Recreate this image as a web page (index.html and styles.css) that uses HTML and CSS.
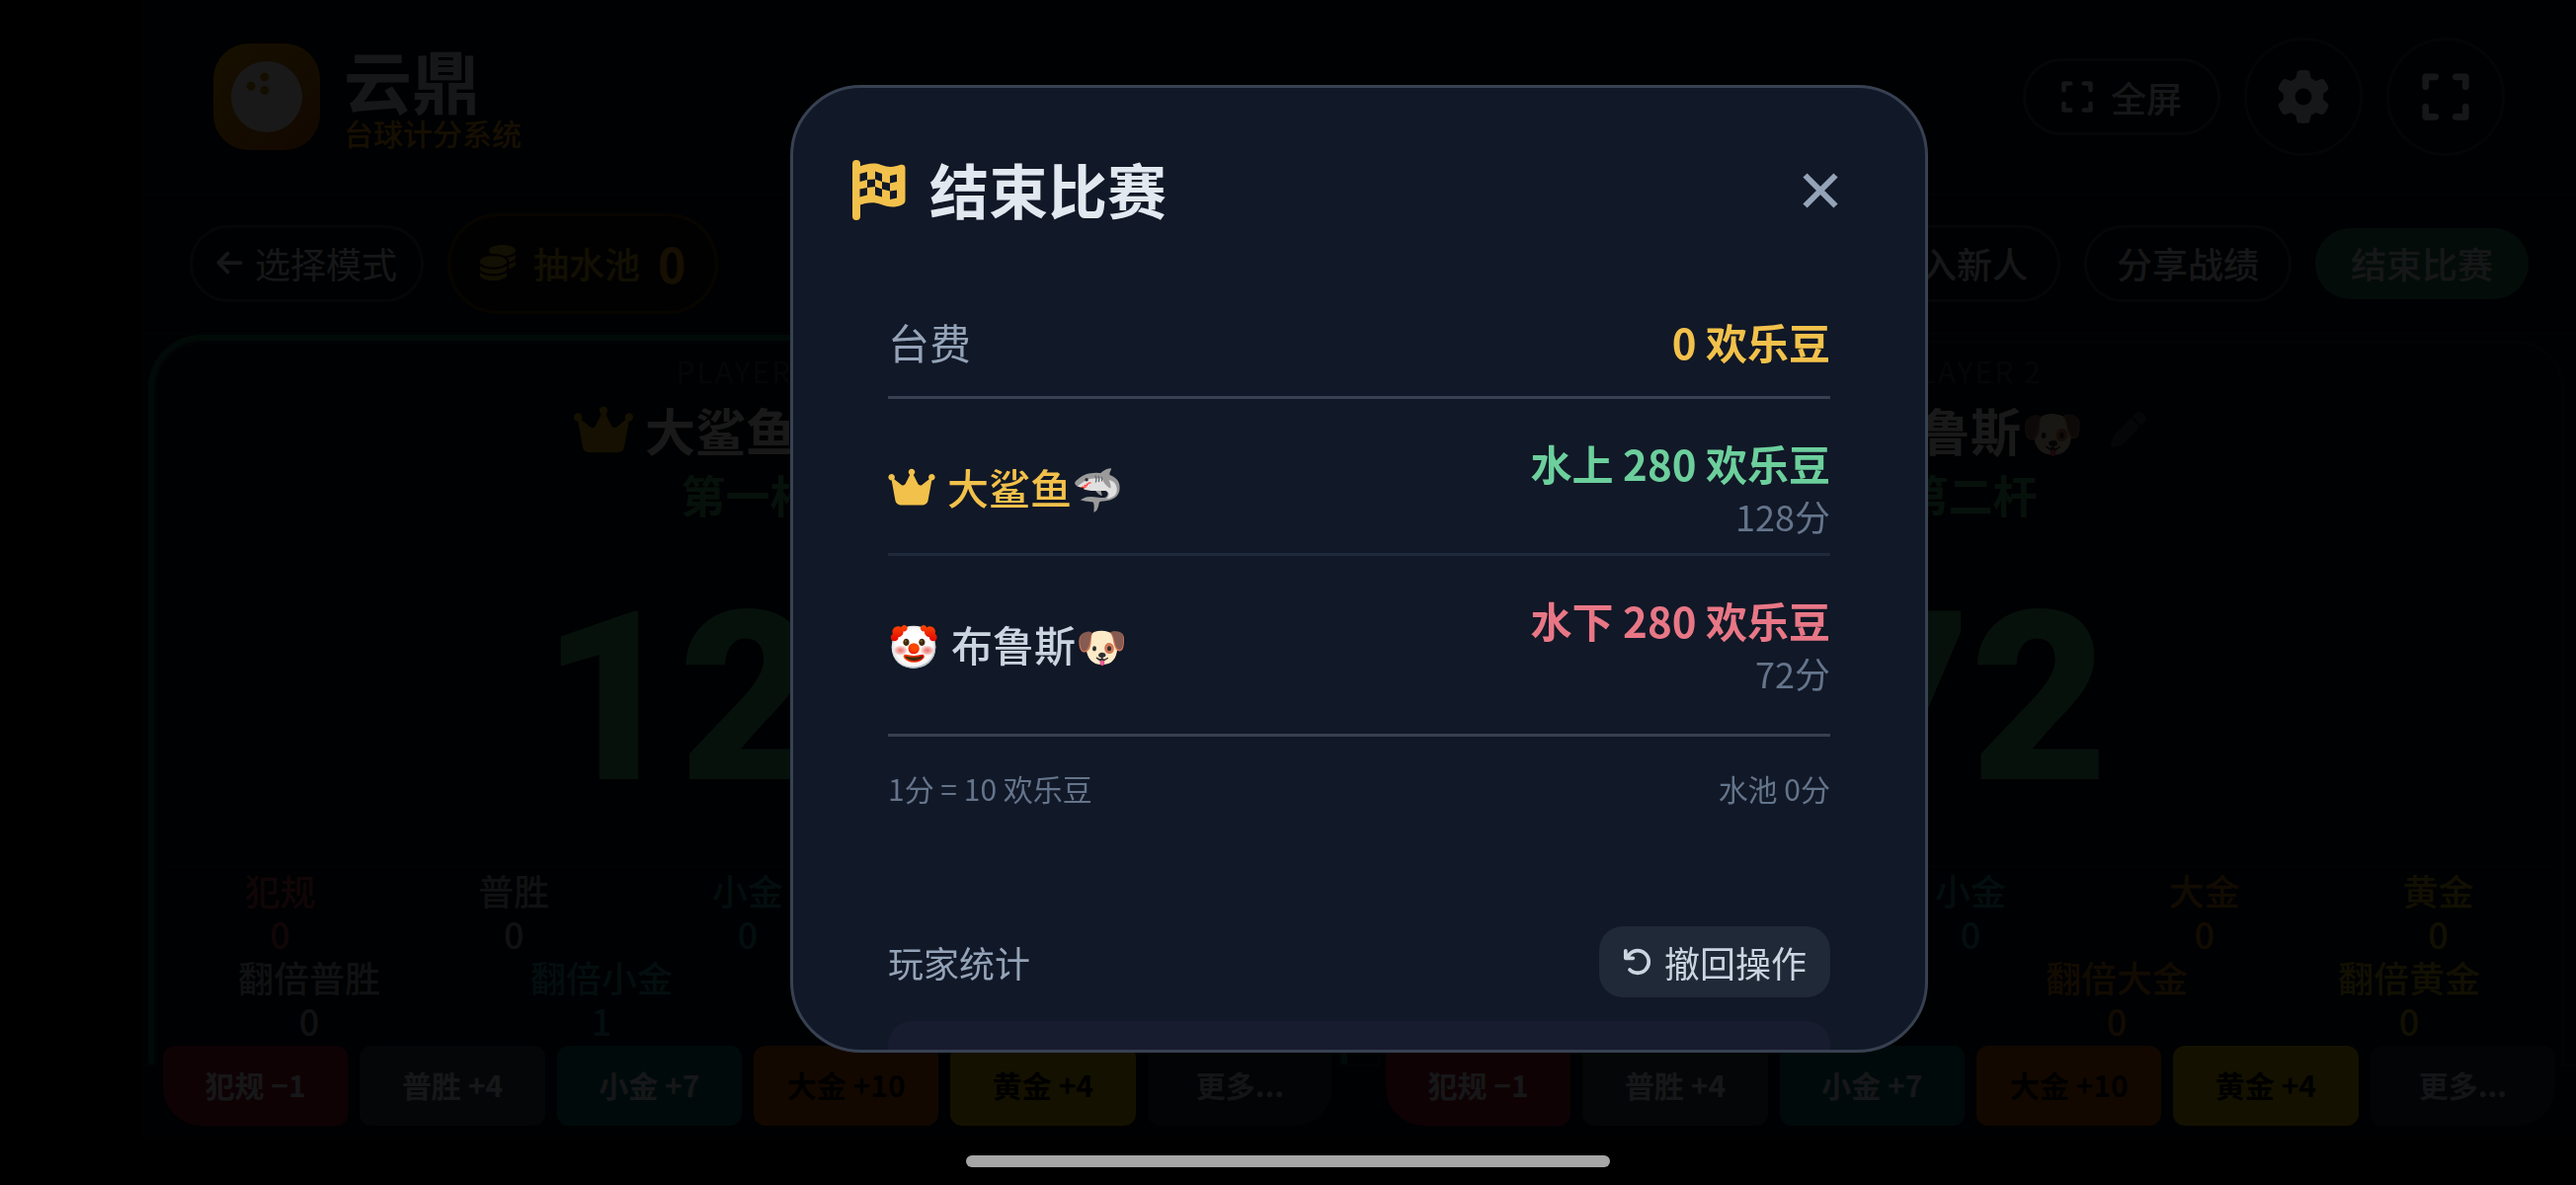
FILE: index.html
```html
<!DOCTYPE html>
<html lang="zh-CN">
<head>
    <meta charset="UTF-8">
    <meta name="viewport" content="width=device-width, initial-scale=1.0">
    <title>云鼎 台球计分系统</title>
    <link rel="stylesheet" href="styles.css">
</head>
<body>
    <!-- shared icons -->
    <svg class="sprite" aria-hidden="true">
        <symbol id="i-crown" viewBox="0 0 576 512"><path d="M309 106c11.4-7 19-19.7 19-34c0-22.1-17.9-40-40-40s-40 17.9-40 40c0 14.4 7.6 27 19 34L209.7 220.6c-9.1 18.2-32.7 23.4-48.6 10.7L72 160c5-6.7 8-15 8-24c0-22.1-17.9-40-40-40S0 113.9 0 136s17.9 40 40 40c.2 0 .5 0 .7 0L86.4 427.4c5.5 30.4 32 52.6 63 52.6H426.6c30.9 0 57.4-22.1 63-52.6L535.3 176c.2 0 .5 0 .7 0c22.1 0 40-17.9 40-40s-17.9-40-40-40s-40 17.9-40 40c0 9 3 17.3 8 24l-89.1 71.3c-15.9 12.7-39.5 7.5-48.6-10.7L309 106z"/></symbol>
        <symbol id="i-expand" viewBox="0 0 448 512"><path d="M32 32C14.3 32 0 46.3 0 64v96c0 17.7 14.3 32 32 32s32-14.3 32-32V96h64c17.7 0 32-14.3 32-32s-14.3-32-32-32H32zM64 352c0-17.7-14.3-32-32-32s-32 14.3-32 32v96c0 17.7 14.3 32 32 32h96c17.7 0 32-14.3 32-32s-14.3-32-32-32H64V352zM320 32c-17.7 0-32 14.3-32 32s14.3 32 32 32h64v64c0 17.7 14.3 32 32 32s32-14.3 32-32V64c0-17.7-14.3-32-32-32H320zM448 352c0-17.7-14.3-32-32-32s-32 14.3-32 32v64H320c-17.7 0-32 14.3-32 32s14.3 32 32 32h96c17.7 0 32-14.3 32-32V352z"/></symbol>
        <symbol id="i-gear" viewBox="0 0 512 512"><path d="M495.9 166.6c3.2 8.7 .5 18.4-6.4 24.6l-43.3 39.4c1.1 8.3 1.7 16.8 1.7 25.4s-.6 17.1-1.7 25.4l43.3 39.4c6.9 6.2 9.6 15.9 6.4 24.6c-4.4 11.9-9.7 23.3-15.8 34.3l-4.7 8.1c-6.6 11-14 21.4-22.1 31.2c-5.9 7.2-15.7 9.6-24.5 6.8l-55.7-17.7c-13.4 10.3-28.2 18.9-44 25.4l-12.5 57.1c-2 9.1-9 16.3-18.2 17.8c-13.8 2.3-28 3.5-42.5 3.5s-28.7-1.2-42.5-3.5c-9.2-1.5-16.2-8.7-18.2-17.8l-12.5-57.1c-15.8-6.5-30.6-15.1-44-25.4L83.1 425.9c-8.8 2.8-18.6 .3-24.5-6.8c-8.1-9.8-15.5-20.2-22.1-31.2l-4.7-8.1c-6.1-11-11.4-22.4-15.8-34.3c-3.2-8.7-.5-18.4 6.4-24.6l43.3-39.4C64.6 273.1 64 264.6 64 256s.6-17.1 1.7-25.4L22.4 191.2c-6.9-6.2-9.6-15.9-6.4-24.6c4.4-11.9 9.7-23.3 15.8-34.3l4.7-8.1c6.6-11 14-21.4 22.1-31.2c5.9-7.2 15.7-9.6 24.5-6.8l55.7 17.7c13.4-10.3 28.2-18.9 44-25.4l12.5-57.1c2-9.1 9-16.3 18.2-17.8C227.3 1.2 241.5 0 256 0s28.7 1.2 42.5 3.5c9.2 1.5 16.2 8.7 18.2 17.8l12.5 57.1c15.8 6.5 30.6 15.1 44 25.4l55.7-17.7c8.8-2.8 18.6-.3 24.5 6.8c8.1 9.8 15.5 20.2 22.1 31.2l4.7 8.1c6.1 11 11.4 22.4 15.8 34.3zM256 336a80 80 0 1 0 0-160 80 80 0 1 0 0 160z"/></symbol>
        <symbol id="i-pen" viewBox="0 0 512 512"><path d="M362.7 19.3L314.3 67.7 444.3 197.7l48.4-48.4c25-25 25-65.5 0-90.5L453.3 19.3c-25-25-65.5-25-90.5 0zm-71 71L58.6 323.5c-10.4 10.4-18 23.3-22.2 37.4L1 481.2C-1.5 489.7 .8 498.8 7 505s15.3 8.5 23.7 6.1l120.3-35.4c14.1-4.2 27-11.8 37.4-22.2L421.7 220.3 291.7 90.3z"/></symbol>
    </svg>

    <div class="app">
        <header class="topbar">
            <div class="brand">
                <svg class="logo" viewBox="0 0 36 36" aria-hidden="true">
                    <circle cx="18" cy="18" r="12" fill="#fff"/>
                    <circle cx="12.7" cy="14.4" r="1.5" fill="#c98a06"/>
                    <circle cx="17.3" cy="11.3" r="1.5" fill="#c98a06"/>
                    <circle cx="17.3" cy="15.8" r="1.5" fill="#c98a06"/>
                </svg>
                <div>
                    <h1>云鼎</h1>
                    <p>台球计分系统</p>
                </div>
            </div>
            <div class="top-actions">
                <button class="pill pill-full"><svg class="icon"><use href="#i-expand"/></svg>全屏</button>
                <button class="round" aria-label="设置"><svg class="icon-lg"><use href="#i-gear"/></svg></button>
                <button class="round" aria-label="全屏"><svg class="icon-lg"><use href="#i-expand"/></svg></button>
            </div>
        </header>

        <nav class="toolbar">
            <button class="pill pill-back">
                <svg class="icon-sm" viewBox="0 0 448 512"><path d="M9.4 233.4c-12.5 12.5-12.5 32.8 0 45.3l160 160c12.5 12.5 32.8 12.5 45.3 0s12.5-32.8 0-45.3L109.2 288 416 288c17.7 0 32-14.3 32-32s-14.3-32-32-32l-306.7 0L214.6 118.6c12.5-12.5 12.5-32.8 0-45.3s-32.8-12.5-45.3 0l-160 160z"/></svg>选择模式
            </button>
            <div class="pool">
                <svg class="icon-pool" viewBox="0 0 512 512"><path d="M512 80c0 18-14.3 34.6-38.4 48c-29.1 16.1-72.5 27.5-122.3 30.9c-3.7-1.8-7.4-3.5-11.3-5C300.6 137.4 248.2 128 192 128c-8.3 0-16.4 .2-24.5 .6l-1.1-.6C142.3 114.6 128 98 128 80c0-44.2 86-80 192-80S512 35.8 512 80zM160.7 161.1c10.2-.7 20.7-1.1 31.3-1.1c62.2 0 117.4 12.3 152.5 31.4C369.3 204.9 384 221.7 384 240c0 4-.7 7.9-2.1 11.7c-4.6 13.2-17 25.3-35 35.5c-.4 .2-.9 .5-1.3 .7c-35 19.4-90.8 32-153.6 32c-59.6 0-112.9-11.3-148.2-29.1c-1.9-.9-3.7-1.9-5.5-2.9C14.3 274.6 0 258 0 240c0-34.8 53.4-64.5 128-75.4c10.5-1.5 21.4-2.7 32.7-3.5zM416 240c0-21.9-10.6-39.9-24.1-53.4c28.3-4.4 54.2-11.4 76.2-20.5c16.3-6.8 31.5-15.2 43.9-25.5V176c0 19.3-16.5 37.1-43.8 50.9c-14.6 7.4-32.4 13.7-52.4 18.5c.1-1.8 .2-3.5 .2-5.3zm-32 96c0 18-14.3 34.6-38.4 48c-1.8 1-3.6 1.9-5.5 2.9C304.9 404.7 251.6 416 192 416c-62.8 0-118.6-12.6-153.6-32C14.3 370.6 0 354 0 336V300.6c12.5 10.3 27.6 18.7 43.9 25.5C83.4 342.6 135.8 352 192 352s108.6-9.4 148.1-25.9c16.3-6.8 31.5-15.2 43.9-25.5V336zm32 0V278.1c19-4.2 36.5-9.5 52.1-16c16.3-6.8 31.5-15.2 43.9-25.5V272c0 10.5-5 21-14.9 30.9c-16.3 16.3-45 29.7-81.3 38.4c.1-1.7 .2-3.5 .2-5.3zM192 448c56.2 0 108.6-9.4 148.1-25.9c16.3-6.8 31.5-15.2 43.9-25.5V432c0 44.2-86 80-192 80S0 476.2 0 432V396.6c12.5 10.3 27.6 18.7 43.9 25.5C83.4 438.6 135.8 448 192 448z"/></svg>
                <span>抽水池</span>
                <strong>0</strong>
            </div>
            <div class="spacer"></div>
            <button class="pill">加入新人</button>
            <button class="pill">分享战绩</button>
            <button class="pill pill-end">结束比赛</button>
        </nav>

        <main class="board">
            <section class="player active">
                <p class="tag">PLAYER 1</p>
                <h2 class="name"><svg class="crown"><use href="#i-crown"/></svg><span>大鲨鱼🦈</span><button class="edit" aria-label="修改名字"><svg class="icon-pen"><use href="#i-pen"/></svg></button></h2>
                <p class="turn">第一杆</p>
                <p class="score">128</p>
                <div class="stats stats-top">
                    <div class="c-foul">犯规<b>0</b></div>
                    <div class="c-win">普胜<b>0</b></div>
                    <div class="c-small">小金<b>0</b></div>
                    <div class="c-big">大金<b>0</b></div>
                    <div class="c-gold">黄金<b>0</b></div>
                </div>
                <div class="stats">
                    <div class="c-win">翻倍普胜<b>0</b></div>
                    <div class="c-small">翻倍小金<b>1</b></div>
                    <div class="c-big">翻倍大金<b>0</b></div>
                    <div class="c-gold">翻倍黄金<b>0</b></div>
                </div>
            </section>

            <section class="player">
                <p class="tag">PLAYER 2</p>
                <h2 class="name"><span>🤡</span><span>布鲁斯🐶</span><button class="edit" aria-label="修改名字"><svg class="icon-pen"><use href="#i-pen"/></svg></button></h2>
                <p class="turn">第二杆</p>
                <p class="score">72</p>
                <div class="stats stats-top">
                    <div class="c-foul">犯规<b>0</b></div>
                    <div class="c-win">普胜<b>0</b></div>
                    <div class="c-small">小金<b>0</b></div>
                    <div class="c-big">大金<b>0</b></div>
                    <div class="c-gold">黄金<b>0</b></div>
                </div>
                <div class="stats">
                    <div class="c-win">翻倍普胜<b>0</b></div>
                    <div class="c-small">翻倍小金<b>0</b></div>
                    <div class="c-big">翻倍大金<b>0</b></div>
                    <div class="c-gold">翻倍黄金<b>0</b></div>
                </div>
            </section>
        </main>

        <footer class="action-bar">
            <div class="actions">
                <button class="b-foul">犯规 −1</button>
                <button class="b-win">普胜 +4</button>
                <button class="b-small">小金 +7</button>
                <button class="b-big">大金 +10</button>
                <button class="b-gold">黄金 +4</button>
                <button class="b-more">更多...</button>
            </div>
            <div class="actions">
                <button class="b-foul">犯规 −1</button>
                <button class="b-win">普胜 +4</button>
                <button class="b-small">小金 +7</button>
                <button class="b-big">大金 +10</button>
                <button class="b-gold">黄金 +4</button>
                <button class="b-more">更多...</button>
            </div>
        </footer>
    </div>

    <!-- end of match dialog -->
    <div class="overlay">
        <div class="modal" role="dialog" aria-labelledby="modalTitle">
            <div class="modal-head">
                <svg class="flag" viewBox="0 0 54 61" aria-hidden="true">
                    <rect width="8" height="61" rx="4" fill="#f2c14b"/>
                    <path d="M6 7C14 4 22 2 29 5C37 8 43 7 48 5C51 4 53.500 5 53.500 8V41C53.500 43 52 44.500 50 45.500C43 48.500 36 48 29 45C22 42 14 43 6 46Z" fill="#f2c14b"/>
                    <path d="M7.500 14L15 12V20L7.500 22ZM15 20L23 19.500V27L15 28ZM7.500 29.500L15 28V35.500L7.500 37.500ZM23 11.500L30 14V22L23 19.500ZM23 27L30 29.500V37.500L23 35.500ZM30 22L38 23.500V31.500L30 29.500ZM38 16L45 14.500V22L38 23.500ZM38 31.500L45 30.500V38.500L38 40Z" fill="#111827"/>
                </svg>
                <h2 id="modalTitle">结束比赛</h2>
                <button class="close" aria-label="关闭">
                    <svg viewBox="0 0 36 36"><path d="M2.500 2.500L33.500 33.500M33.500 2.500L2.500 33.500"/></svg>
                </button>
            </div>
            <div class="modal-body">
                <div class="bill">
                    <div class="fee"><span>台费</span><strong>0 欢乐豆</strong></div>
                    <div class="result">
                        <span class="who winner"><svg class="crown"><use href="#i-crown"/></svg>大鲨鱼🦈</span>
                        <div class="amount"><strong class="up">水上 280 欢乐豆</strong><small>128分</small></div>
                    </div>
                    <div class="result">
                        <span class="who"><span>🤡</span>布鲁斯🐶</span>
                        <div class="amount"><strong class="down">水下 280 欢乐豆</strong><small>72分</small></div>
                    </div>
                    <div class="note"><span>1分 = 10 欢乐豆</span><span>水池 0分</span></div>
                </div>
                <div class="player-stats">
                    <div class="stats-head">
                        <h3>玩家统计</h3>
                        <button class="undo">
                            <svg viewBox="0 0 512 512"><path d="M125.700 160H176c17.700 0 32 14.300 32 32s-14.300 32-32 32H48c-17.700 0-32-14.300-32-32V64c0-17.700 14.300-32 32-32s32 14.300 32 32v51.200L97.600 97.600c87.500-87.500 229.300-87.500 316.800 0s87.500 229.300 0 316.800s-229.300 87.500-316.800 0c-12.500-12.500-12.500-32.800 0-45.300s32.800-12.500 45.300 0c62.500 62.500 163.800 62.500 226.300 0s62.500-163.800 0-226.300s-163.800-62.500-226.300 0L125.700 160z"/></svg>撤回操作
                        </button>
                    </div>
                    <div class="stat-card"></div>
                </div>
            </div>
        </div>
    </div>
    <div class="home-bar"></div>
</body>
</html>
```
FILE: styles.css
```css
/* general */
* {
    box-sizing: border-box;
}

body {
    margin: 0;
    height: 100vh;
    overflow: hidden;
    background-color: #000;
    color: #e2e8f0;
    font-family: "Noto Sans CJK SC", "Noto Sans", sans-serif;
    /* keep clear of the notch and the home bar */
    padding: 0 0 48px 144px;
}

h1, h2, h3, p {
    margin: 0;
}

button {
    font: inherit;
    color: inherit;
    background: none;
    border: none;
    padding: 0;
    cursor: pointer;
}

svg {
    fill: currentColor;
    flex: none;
}

.sprite {
    display: none;
}

.app {
    height: 100%;
    display: flex;
    flex-direction: column;
    background-color: #080c18;
}

/* top bar */
.topbar {
    display: flex;
    align-items: center;
    justify-content: space-between;
    height: 198px;
    padding: 0 72px;
    border-bottom: 3px solid #131a28;
}

.brand {
    display: flex;
    align-items: center;
    gap: 24px;
}

.logo {
    width: 108px;
    height: 108px;
    border-radius: 36px;
    background: linear-gradient(135deg, #e0a106, #c2540c);
}

.brand h1 {
    font-size: 69px;
    line-height: 72px;
    font-weight: 700;
}

.brand p {
    font-size: 30px;
    line-height: 36px;
    font-weight: 500;
    color: #d99a1c;
}

.top-actions {
    display: flex;
    align-items: center;
    gap: 24px;
}

.pill {
    display: flex;
    align-items: center;
    height: 78px;
    padding: 0 30px 3px;
    border: 3px solid #334155;
    border-radius: 39px;
    font-size: 36px;
    font-weight: 500;
}

.pill-full {
    gap: 18px;
    padding: 0 36px;
}

.pill-back {
    gap: 12px;
    padding: 0 24px 3px;
    font-weight: 400;
}

.pill-end {
    height: 72px;
    padding: 0 36px 3px;
    border: none;
    background-color: #2f7f5c;
}

.round {
    display: flex;
    align-items: center;
    justify-content: center;
    width: 120px;
    height: 120px;
    border: 3px solid #263244;
    border-radius: 50%;
}

.icon {
    width: 32px;
    height: 36px;
}

.icon-sm {
    width: 27px;
    height: 30px;
}

.icon-lg {
    width: 54px;
    height: 54px;
}

.icon-pool,
.icon-pen {
    width: 36px;
    height: 36px;
}

/* toolbar */
.toolbar {
    display: flex;
    align-items: center;
    gap: 24px;
    padding: 18px 48px;
    border-bottom: 3px solid #131a28;
}

.pool {
    display: flex;
    align-items: center;
    gap: 18px;
    height: 102px;
    padding: 0 30px 3px;
    border: 3px solid #54380c;
    border-radius: 51px;
    background-color: #171310;
    color: #b8a01c;
    font-size: 36px;
    font-weight: 500;
}

.pool strong {
    font-size: 48px;
    font-weight: 700;
    color: #d99a1c;
}

.spacer {
    flex: 1;
}

/* score board */
.board {
    flex: 1;
    display: flex;
    gap: 36px;
    padding: 6px 12px 0;
    overflow: hidden;
}

.player {
    flex: 1;
    display: flex;
    flex-direction: column;
    padding: 6px 6px 22px;
    border: 3px solid #1b2230;
    border-bottom: none;
    border-radius: 48px 48px 0 0;
    background-color: #060a14;
    text-align: center;
}

.active {
    box-shadow: 0 0 0 6px #0f6b48;
}

.tag {
    font-size: 30px;
    line-height: 42px;
    letter-spacing: 2px;
    color: #374151;
}

.name {
    display: flex;
    align-items: center;
    justify-content: center;
    gap: 12px;
    font-size: 51px;
    line-height: 78px;
    font-weight: 700;
    color: #fff;
}

.name .crown {
    width: 60px;
    height: 54px;
    color: #d0a60a;
}

.edit {
    display: flex;
    padding: 0 0 0 15px;
    color: #374151;
}

.turn {
    font-size: 45px;
    line-height: 54px;
    font-weight: 700;
    color: #46a878;
}

.score {
    flex: 1;
    display: flex;
    align-items: center;
    justify-content: center;
    padding-top: 10px;
    font-family: Roboto, sans-serif;
    font-size: 240px;
    line-height: 240px;
    font-weight: 900;
    color: #46a878;
}

.stats {
    display: flex;
    font-size: 36px;
    line-height: 44px;
    font-weight: 500;
}

.stats-top {
    border-top: 3px solid #131a28;
}

.stats div {
    flex: 1;
}

.stats b {
    display: block;
    font-weight: 500;
}

.c-foul { color: #a83e48; }
.c-win { color: #a3acb8; }
.c-small { color: #2a9096; }
.c-big { color: #b87318; }
.c-gold { color: #b8a01c; }

/* action buttons reach up into the player cards */
.action-bar {
    display: flex;
    gap: 42px;
    padding: 0 15px 12px;
    border-top: 3px solid #1b2230;
}

.actions {
    flex: 1;
    display: flex;
    gap: 12px;
    margin-top: -21px;
    padding: 0 6px;
    background-color: #060a14;
}

.actions button {
    flex: 1;
    height: 81px;
    padding-bottom: 3px;
    border-radius: 12px;
    font-size: 30px;
    font-weight: 700;
    color: #e2e8f0;
}

.actions button:first-child {
    border-bottom-left-radius: 39px;
}

.actions button:last-child {
    border-bottom-right-radius: 39px;
}

.actions .b-foul { background-color: #961430; }
.actions .b-win { background-color: #374151; }
.actions .b-small { background-color: #0f6672; }
.actions .b-big { background-color: #b45309; color: #000; }
.actions .b-gold { background-color: #c9a804; color: #000; }
.actions .b-more { background-color: #1f2937; color: #cbd5e1; }

/* dialog */
.overlay {
    position: fixed;
    inset: 0;
    display: flex;
    align-items: center;
    justify-content: center;
    padding: 0 0 48px 144px;
    background-color: rgba(0, 0, 0, 0.9);
}

.modal {
    display: flex;
    flex-direction: column;
    width: 1152px;
    height: 85%;
    border: 3px solid #374151;
    border-radius: 72px;
    background-color: #111827;
    overflow: hidden;
}

.modal-head {
    display: flex;
    align-items: center;
    gap: 24px;
    padding: 57px 60px 0;
}

.flag {
    width: 54px;
    height: 61px;
}

.modal-head h2 {
    flex: 1;
    font-size: 60px;
    line-height: 87px;
    padding-bottom: 3px;
    font-weight: 700;
}

.close {
    display: flex;
    padding: 29px 28px 27px;
}

.close svg {
    width: 36px;
    height: 36px;
    stroke: #94a3b8;
    stroke-width: 6;
}

.modal-body {
    flex: 1;
    padding: 0 60px;
    overflow: hidden;
}

.bill {
    padding: 76px 36px 36px;
}

.fee,
.result,
.note,
.stats-head {
    display: flex;
    align-items: center;
    justify-content: space-between;
}

.fee {
    padding-bottom: 24px;
    border-bottom: 3px solid #374151;
    font-size: 42px;
    line-height: 63px;
    color: #94a3b8;
}

.fee strong {
    color: #f2c14b;
}

.result {
    padding: 38px 0 10px;
    border-bottom: 3px solid #1e293b;
    font-size: 42px;
    line-height: 54px;
}

.result:nth-child(3) {
    padding-bottom: 34px;
    border-bottom-color: #374151;
}

.who {
    display: flex;
    align-items: center;
    gap: 12px;
    padding-bottom: 6px;
    font-weight: 500;
    color: #cbd5e1;
}

.who .crown {
    width: 48px;
    height: 42px;
}

.winner {
    color: #f2c14b;
}

.amount {
    text-align: right;
}

.amount strong,
.amount small {
    display: block;
}

.amount small {
    font-size: 36px;
    line-height: 52px;
    padding-bottom: 2px;
    color: #64748b;
}

.up { color: #6ccf9c; }
.down { color: #e87786; }

.note {
    padding-top: 31px;
    font-size: 30px;
    line-height: 42px;
    color: #64748b;
}

.player-stats {
    padding: 83px 36px 0;
}

.stats-head h3 {
    font-size: 36px;
    font-weight: 400;
    color: #94a3b8;
}

.undo {
    display: flex;
    align-items: center;
    gap: 12px;
    height: 72px;
    padding: 0 24px;
    border-radius: 24px;
    background-color: #1f2937;
    font-size: 36px;
    color: #cbd5e1;
}

.undo svg {
    width: 30px;
    height: 30px;
}

.stat-card {
    height: 240px;
    margin-top: 24px;
    border-radius: 24px;
    background-color: #181c2f;
}

.home-bar {
    position: fixed;
    bottom: 18px;
    left: 50%;
    width: 652px;
    height: 12px;
    margin-left: -326px;
    border-radius: 6px;
    background-color: #a6a6a6;
}
```
